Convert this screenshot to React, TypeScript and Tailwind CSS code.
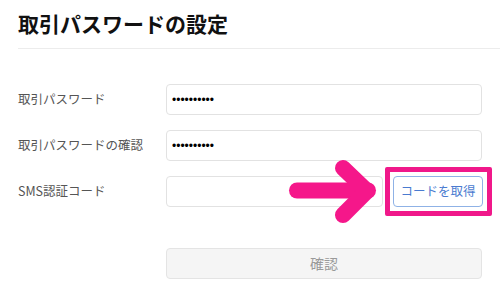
import React from "react";

export default function App() {
  return (
    <div
      className="relative w-[500px] h-[301px] bg-white overflow-hidden pl-[18px]"
      style={{ fontFamily: '"Noto Sans CJK JP", "Noto Sans", sans-serif' }}
    >
      <div className="h-[49px] flex items-center border-b border-[#ececec]">
        <h1 className="text-[21px] font-bold text-[#111] leading-none -mt-[1px]">取引パスワードの設定</h1>
      </div>

      <div className="mt-[35px] flex flex-col gap-[15px]">
        <div className="flex items-center">
          <div className="w-[148px] text-[12.5px] text-[#555]">取引パスワード</div>
          <input
            type="password"
            readOnly
            value="1234567890"
            className="w-[316px] h-[31px] border border-[#e2e2e2] rounded-[4px] px-[5px] text-[12px] text-black outline-none"
            style={{ fontFamily: '"Liberation Sans", Arial, sans-serif' }}
          />
        </div>
        <div className="flex items-center">
          <div className="w-[148px] text-[12.5px] text-[#555]">取引パスワードの確認</div>
          <input
            type="password"
            readOnly
            value="1234567890"
            className="w-[316px] h-[31px] border border-[#e2e2e2] rounded-[4px] px-[5px] text-[12px] text-black outline-none"
            style={{ fontFamily: '"Liberation Sans", Arial, sans-serif' }}
          />
        </div>
        <div className="flex items-center">
          <div className="w-[148px] text-[12.5px] text-[#555]">SMS認証コード</div>
          <input
            type="text"
            readOnly
            value=""
            className="w-[217px] h-[31px] border border-[#e2e2e2] rounded-[4px] px-[5px] text-[12px] outline-none"
          />
          <div className="relative ml-[10px]">
            <button className="w-[90px] h-[31px] border border-[#8fb2e6] rounded-[4px] bg-white text-[12.5px] text-[#4a7bd0] flex items-center justify-center">
              コードを取得
            </button>
            <div className="absolute left-[-8px] top-[-9px] w-[107px] h-[49px] border-[5px] border-[#f0188a] rounded-[2px] pointer-events-none" />
          </div>
        </div>
      </div>

      <div className="mt-[41px] flex">
        <div className="w-[148px]" />
        <button className="w-[316px] h-[31px] border border-[#e4e4e4] rounded-[4px] bg-[#f5f5f5] text-[14px] text-[#9a9a9a] flex items-center justify-center">
          確認
        </button>
      </div>

      <svg
        className="absolute left-[280px] top-[155px] pointer-events-none"
        width="110"
        height="75"
        viewBox="0 0 110 75"
      >
        <g stroke="#f5178a" strokeWidth="16" strokeLinecap="round" strokeLinejoin="round" fill="none">
          <line x1="17" y1="35.5" x2="88" y2="35.5" />
          <polyline points="63,13 87,36 63,60" />
        </g>
      </svg>
    </div>
  );
}
